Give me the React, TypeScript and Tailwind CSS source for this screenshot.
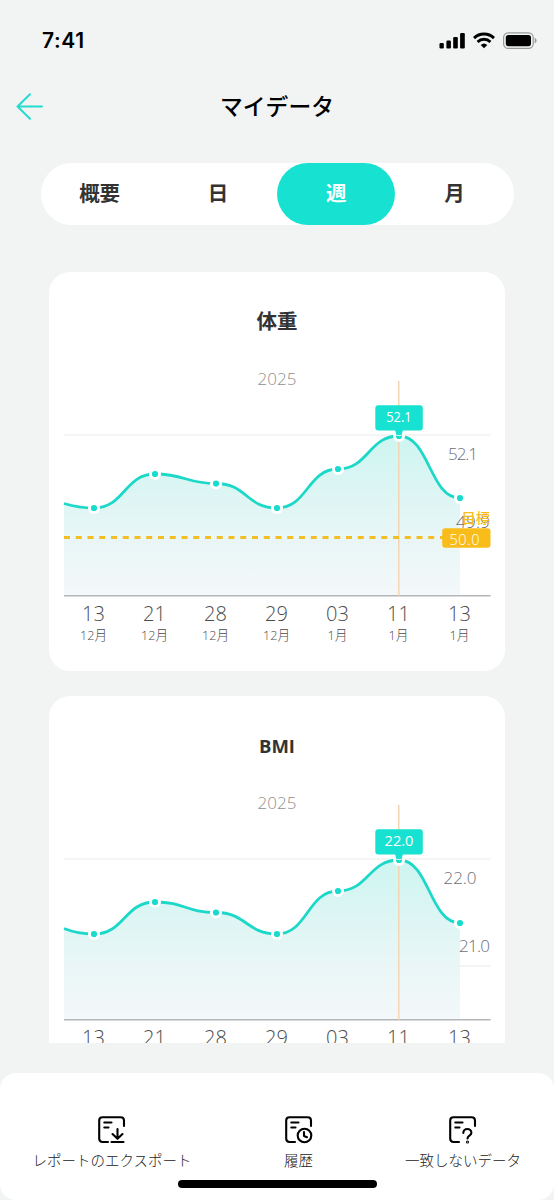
type Point = { x: number; y: number };

type ChartData = {
  id: string;
  title: string;
  edgeY: number;
  ys: number[];
  tooltip: string;
  high: { text: string; x: number; y: number; width: number };
  low: { text: string; x: number; y: number; width: number };
  goal?: string;
};

const DAYS = [
  ["13", "12月"],
  ["21", "12月"],
  ["28", "12月"],
  ["29", "12月"],
  ["03", "1月"],
  ["11", "1月"],
  ["13", "1月"],
];

const CHARTS: ChartData[] = [
  {
    id: "weight",
    title: "体重",
    edgeY: 143.5,
    ys: [148, 114, 123.5, 148, 109, 76, 138],
    tooltip: "52.1",
    high: { text: "52.1", x: 399, y: 100, width: 30 },
    low: { text: "49.9", x: 407, y: 168, width: 34 },
    goal: "50.0",
  },
  {
    id: "bmi",
    title: "BMI",
    edgeY: 144.5,
    ys: [150, 118, 128.5, 150, 107, 76, 139],
    tooltip: "22.0",
    high: { text: "22.0", x: 394.5, y: 100, width: 33 },
    low: { text: "21.0", x: 410, y: 168, width: 31 },
  },
];

const TABS = ["概要", "日", "週", "月"];

const PLOT_LEFT = 15;
const PLOT_RIGHT = 441.5;
const BASELINE = 235.8;
const SELECTED = 5;

// flat tangent at every sample, control points halfway between neighbours
function curve(points: Point[], edgeY: number) {
  let d = `M${PLOT_LEFT},${edgeY} C${PLOT_LEFT + 10},${points[0].y - 1.5} ${points[0].x - 10},${points[0].y} ${points[0].x},${points[0].y}`;
  for (let i = 1; i < points.length; i++) {
    const a = points[i - 1];
    const b = points[i];
    const mid = (a.x + b.x) / 2;
    d += ` C${mid},${a.y} ${mid},${b.y} ${b.x},${b.y}`;
  }
  return d;
}

function Chart({ data }: { data: ChartData }) {
  const points = data.ys.map((y, i) => ({ x: 45 + i * 61, y }));
  const line = curve(points, data.edgeY);
  const last = points[points.length - 1];
  const sel = points[SELECTED];

  return (
    <svg
      width="456"
      height="300"
      viewBox="0 0 456 300"
      className="block shrink-0 font-['Open_Sans','Noto_Sans_CJK_JP',sans-serif] font-light"
    >
      <defs>
        <linearGradient id={`fill-${data.id}`} gradientUnits="userSpaceOnUse" x1="0" y1="76" x2="0" y2="236">
          <stop offset="0" stopColor="#cef5f1" />
          <stop offset="0.6" stopColor="#e7f6f6" />
          <stop offset="1" stopColor="#f4f8fa" />
        </linearGradient>
      </defs>
      <path d={`M${PLOT_LEFT},75H${PLOT_RIGHT}M${PLOT_LEFT},182H${PLOT_RIGHT}`} stroke="#f0f1f1" strokeWidth="1.5" />
      <path d={`${line} L${last.x},${BASELINE} L${PLOT_LEFT},${BASELINE} Z`} fill={`url(#fill-${data.id})`} />
      <path d={`M${PLOT_LEFT},182H${last.x}`} stroke="#f0f1f1" strokeWidth="1" opacity="0.7" />
      <path d={line} fill="none" stroke="#1cd8c8" strokeWidth="2.8" />
      {points.map((p) => (
        <g key={p.x}>
          <circle cx={p.x} cy={p.y} r="6" fill="white" />
          <circle cx={p.x} cy={p.y} r="3.1" fill="#17dccd" />
        </g>
      ))}
      <path d={`M${PLOT_LEFT},${BASELINE}H${PLOT_RIGHT}`} stroke="#b3b6b8" strokeWidth="1.5" />
      <path d={`M${sel.x - 0.2},21V70M${sel.x - 0.2},82V${BASELINE}`} stroke="#f5d3ae" strokeWidth="1.4" />

      <path d={`M${sel.x - 4},70H${sel.x + 4}L${sel.x + 2.8},74V76.5Q${sel.x},79 ${sel.x - 2.8},76.5V74Z`} fill="#17e1d1" />
      <path d={`M${sel.x - 4},75.4H${sel.x + 4}`} stroke="#d4f3ef" strokeWidth="1" />
      <rect x={sel.x - 23.7} y="45.2" width="47.5" height="25.4" rx="3" fill="#17e1d1" />
      <text
        x={sel.x}
        y="62"
        textAnchor="middle"
        fontSize="14"
        className="font-normal"
        fill="white"
        textLength={data.goal ? 25.5 : 29}
        lengthAdjust="spacingAndGlyphs"
      >
        {data.tooltip}
      </text>

      <text x="228" y="25" textAnchor="middle" fontSize="17" fill="#8f8f8f" textLength="39">
        2025
      </text>
      <text x={data.high.x} y={data.high.y} fontSize="17" fill="#6b6e77" textLength={data.high.width}>
        {data.high.text}
      </text>
      <text x={data.low.x} y={data.low.y} fontSize="17" fill="#6b6e77" textLength={data.low.width}>
        {data.low.text}
      </text>

      {data.goal && (
        <>
          <path d={`M${PLOT_LEFT},177.4H393`} stroke="#f5bd24" strokeWidth="3" strokeDasharray="6 5.75" />
          <text x="412.5" y="162.5" fontSize="14.2" className="font-medium" fill="#f9bd1b">
            目標
          </text>
          <path d="M391,177.5L395,175V180Z" fill="#f9bd1b" />
          <rect x="393.2" y="168.2" width="48.3" height="19.6" rx="3" fill="#f9bd1b" />
          <text x="400.5" y="184.8" fontSize="14.5" fill="white" className="font-light" textLength="30">
            {data.goal}
          </text>
        </>
      )}

      {DAYS.map(([day, month], i) => (
        <g key={i} textAnchor="middle" fill="#4b4b4b">
          <text x={45 + i * 61 - 0.5} y="261" fontSize="20">
            {day}
          </text>
          <text
            x={45 + i * 61 - 0.5}
            y="279.5"
            fontSize="13.5"
            textLength={month.length === 3 ? 27 : 20}
            lengthAdjust="spacingAndGlyphs"
          >
            {month}
          </text>
        </g>
      ))}
    </svg>
  );
}

function StatusBar() {
  return (
    <div className="flex h-[81px] items-start justify-between pt-[30px] pr-4 pl-[42px]">
      <span className="font-['Inter',sans-serif] text-[21px] leading-[21px] font-semibold tracking-[0.6px] text-black">7:41</span>
      <div className="flex gap-2 pt-0.5">
        <svg width="26" height="17" viewBox="0 0 26 17">
          <rect x="0.5" y="11" width="4.3" height="5.5" rx="1.2" />
          <rect x="7.4" y="8.5" width="4.5" height="8" rx="1.2" />
          <rect x="14.2" y="5" width="4.6" height="11.5" rx="1.2" />
          <rect x="21.1" y="1" width="4.7" height="15.5" rx="1.2" />
        </svg>
        <svg width="22" height="17" viewBox="0 0 22 17" fill="none" stroke="black" strokeWidth="3">
          <path d="M1,6.1A14.2,14.2 0 0 1 21,6.1" />
          <path d="M4.6,10A9.1,9.1 0 0 1 17.4,10" />
          <path d="M7.7,13A4.8,4.8 0 0 1 14.3,13L11,16.3Z" fill="black" stroke="none" />
        </svg>
        <svg width="35" height="17" viewBox="0 0 35 17">
          <rect x="0.6" y="0.8" width="29.6" height="15.6" rx="4.6" fill="none" stroke="#989a9a" strokeWidth="1.2" />
          <rect x="2.8" y="3" width="25.2" height="11.2" rx="2.6" />
          <path d="M31.7,5.8C34.2,6.8 34.2,10.4 31.7,11.4Z" fill="#989a9a" />
        </svg>
      </div>
    </div>
  );
}

type IconKind = "export" | "history" | "unknown";

function DocIcon({ kind }: { kind: IconKind }) {
  return (
    <svg
      width="28"
      height="28"
      viewBox="0 0 28 28"
      fill="none"
      stroke="black"
      strokeWidth="2.1"
      strokeLinecap="round"
      strokeLinejoin="round"
    >
      <path d="M10,26H4.5Q1.2,26 1.2,22.5V4.5Q1.2,1.2 4.5,1.2H22.5Q26,1.2 26,4.5V10" />
      <path d="M6.3,6.5H13.5M6.3,11.5H10.5" />
      {kind === "export" && <path d="M19.5,13V22.5M14.5,18L19.5,22.8L24.5,18M13.5,26H25.5" />}
      {kind === "history" && (
        <>
          <circle cx="19.5" cy="19.5" r="6.8" />
          <path d="M19,16V20L22,21.2" />
        </>
      )}
      {kind === "unknown" && (
        <>
          <path d="M14.3,17C14.3,14.5 16.2,13 18.3,13C20.5,13 22.4,14.6 22.4,16.8C22.4,19.8 18.5,19.5 18.5,22.4" />
          <circle cx="18.5" cy="26" r="0.5" />
        </>
      )}
    </svg>
  );
}

function FooterItem({ kind, label, className }: { kind: IconKind; label: string; className: string }) {
  return (
    <div className={`flex flex-col items-center ${className}`}>
      <DocIcon kind={kind} />
      <span className="mt-1.5 text-[14.5px] leading-5 font-light whitespace-nowrap text-[#222]">{label}</span>
    </div>
  );
}

export default function App() {
  return (
    <div className="flex h-[1200px] w-[554px] flex-col overflow-hidden bg-[#f2f4f4] font-['Noto_Sans_CJK_JP',sans-serif] text-[#333]">
      <StatusBar />

      <header className="grid h-[50px] grid-cols-[60px_1fr_60px] items-center">
        <svg
          width="27"
          height="27"
          viewBox="0 0 27 27"
          fill="none"
          stroke="#23dccd"
          strokeWidth="2"
          strokeLinecap="round"
          strokeLinejoin="round"
          className="ml-4"
        >
          <path d="M26,13.5H1.5M14,1.2L1.5,13.5L14,25.8" />
        </svg>
        <h1 className="text-center text-[22.8px] leading-[30px] font-medium text-black">マイデータ</h1>
      </header>

      <nav className="mt-[31.5px] ml-[40.5px] grid h-[62px] w-[473px] shrink-0 grid-cols-4 rounded-full bg-white">
        {TABS.map((tab) => (
          <button
            key={tab}
            type="button"
            className={
              tab === "週"
                ? "rounded-full bg-[#17e1d1] pb-0.5 text-[20.5px] font-bold text-white"
                : "pb-0.5 text-[20.5px] font-bold text-[#333]"
            }
          >
            {tab}
          </button>
        ))}
      </nav>

      <main className="mt-[47.5px] flex h-[771px] shrink-0 flex-col gap-[25px] overflow-hidden pl-[49px]">
        {CHARTS.map((chart) => (
          <section key={chart.id} className="flex h-[399px] w-[456px] shrink-0 flex-col overflow-hidden rounded-[21px] bg-white">
            <h2
              className={
                chart.id === "bmi"
                  ? "flex h-[88px] shrink-0 items-center justify-center pt-3 font-['Open_Sans',sans-serif] text-[18.5px] font-bold"
                  : "flex h-[88px] shrink-0 items-center justify-center pt-2 text-[20.5px] font-bold"
              }
            >
              {chart.title}
            </h2>
            <Chart data={chart} />
          </section>
        ))}
      </main>

      <footer className="relative mt-[30px] h-[127px] shrink-0 rounded-[16px] bg-white">
        <div className="flex pt-[43px]">
          <FooterItem kind="export" label="レポートのエクスポート" className="ml-8 w-[160px]" />
          <FooterItem kind="history" label="履歴" className="ml-[77px] w-[59px]" />
          <FooterItem kind="unknown" label="一致しないデータ" className="ml-[75px] w-[120px]" />
        </div>
        <div className="absolute bottom-3 left-[178px] h-[8px] w-[199px] rounded-full bg-black" />
      </footer>
    </div>
  );
}
